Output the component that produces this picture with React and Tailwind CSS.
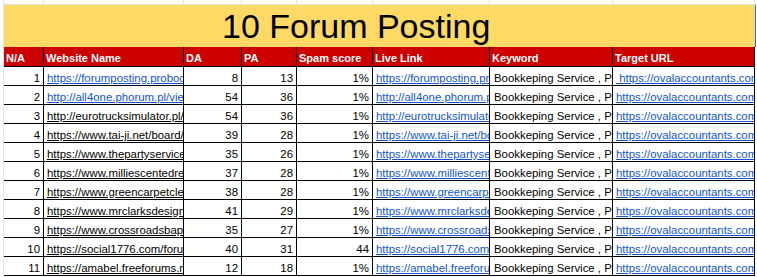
import React from 'react'

const COLS = [
  'w-[40px]',
  'w-[140px]',
  'w-[58px]',
  'w-[55px]',
  'w-[76px]',
  'w-[117px]',
  'w-[123px]',
  'w-[142px]',
]

const HEADERS = ['N/A', 'Website Name', 'DA', 'PA', 'Spam score', 'Live Link', 'Keyword', 'Target URL']

const ROWS = [
  { url: 'https://forumposting.probooks.com/', blue: true, da: 8, pa: 13, spam: '1%', target: ' https://ovalaccountants.com/' },
  { url: 'http://all4one.phorum.pl/viewtopic', blue: true, da: 54, pa: 36, spam: '1%' },
  { url: 'http://eurotrucksimulator.pl/forum', da: 54, pa: 36, spam: '1%' },
  { url: 'https://www.tai-ji.net/board/', da: 39, pa: 28, spam: '1%' },
  { url: 'https://www.thepartyservice.com/', da: 35, pa: 26, spam: '1%' },
  { url: 'https://www.milliescentedreams.com/', da: 37, pa: 28, spam: '1%' },
  { url: 'https://www.greencarpetcleaning.com/', da: 38, pa: 28, spam: '1%' },
  { url: 'https://www.mrclarksdesign.com/', da: 41, pa: 29, spam: '1%' },
  { url: 'https://www.crossroadsbaptist.org/', da: 35, pa: 27, spam: '1%' },
  { url: 'https://social1776.com/forum/', da: 40, pa: 31, spam: '44' },
  { url: 'https://amabel.freeforums.net/', da: 12, pa: 18, spam: '1%' },
]

const cell = 'flex items-end h-[19px] border-r border-b border-black overflow-hidden whitespace-nowrap px-[3px] leading-[14px]'

export default function App() {
  return (
    <div className="h-[277px] w-[757px] overflow-hidden bg-white font-['Liberation_Sans',Arial,sans-serif] text-[11.4px] text-black">
      <div className="ml-[3px] border-l border-[#e2e3e3]">
        <div className="flex h-[5px] border-b border-[#e2e3e3]">
          {COLS.map((w, i) => (
            <div key={i} className={`${w} border-r border-[#e2e3e3]`} />
          ))}
        </div>

        <div className="flex h-[42px] w-[752px] items-center border-r border-[#1a73e8] bg-[#ffd966] pl-[218px] text-[34px] leading-[42px]">
          10 Forum Posting
        </div>

        <div className="flex h-[20px] bg-white">
          {HEADERS.map((h, i) => (
            <div key={h} className={`${COLS[i]} flex items-end overflow-hidden whitespace-nowrap border-r border-b border-black bg-[#cc0000] px-[2px] pb-[1px] text-[11px] font-bold leading-[14px] text-white`}>
              {h}
            </div>
          ))}
        </div>

        {ROWS.map((r, i) => (
          <div key={i} className="flex">
            <div className={`${COLS[0]} ${cell} justify-end`}>{i + 1}</div>
            <div className={`${COLS[1]} ${cell}`}>
              <span className={r.blue ? 'text-[#1155cc] underline' : 'underline'}>{r.url}</span>
            </div>
            <div className={`${COLS[2]} ${cell} justify-end`}>{r.da}</div>
            <div className={`${COLS[3]} ${cell} justify-end`}>{r.pa}</div>
            <div className={`${COLS[4]} ${cell} justify-end`}>{r.spam}</div>
            <div className={`${COLS[5]} ${cell}`}>
              <span className="text-[#1155cc] underline">{r.url}</span>
            </div>
            <div className={`${COLS[6]} ${cell} pl-[4px]`}>Bookkeping Service , Payroll</div>
            <div className={`${COLS[7]} ${cell}`}>
              <span className="whitespace-pre text-[#1155cc] underline">{r.target || 'https://ovalaccountants.com/'}</span>
            </div>
          </div>
        ))}
      </div>
    </div>
  )
}
